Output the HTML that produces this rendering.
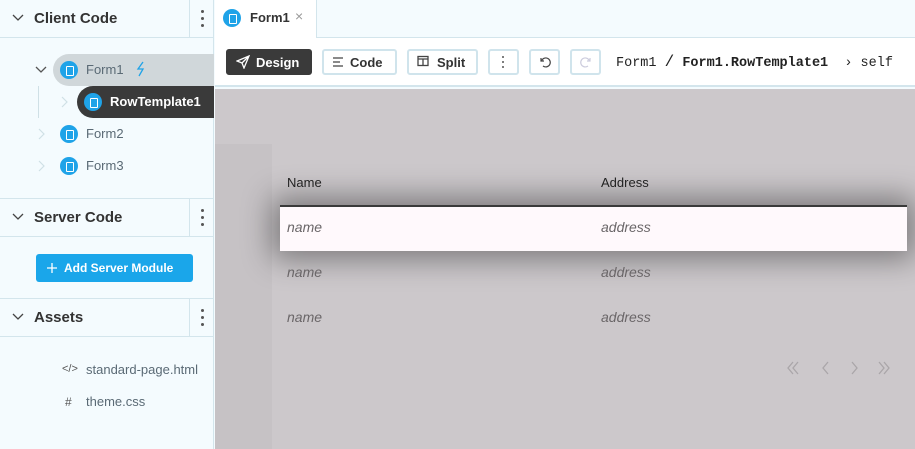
<!DOCTYPE html>
<html><head><style>
*{box-sizing:border-box;margin:0;padding:0}
body{width:915px;height:449px;overflow:hidden;font-family:"Liberation Sans",sans-serif;position:relative;background:#f4fbfe}
.a{position:absolute}
.side{left:0;top:0;width:214px;height:449px;background:#f4fbfe;border-right:1px solid #d3e5ec}
.hdr{left:0;width:214px;height:38px;border-bottom:1px solid #d3e5ec;font-weight:bold;font-size:15px;color:#333}
.hdr .t{position:absolute;left:34px;top:10px}
.hdr .chev{position:absolute;left:11px;top:11px}
.hdr .dots{position:absolute;left:189px;top:0;width:25px;height:37px;border-left:1px solid #d3e5ec}
.dot{position:absolute;width:3px;height:3px;border-radius:50%;background:#555;left:11px}
.ic{position:absolute;width:18px;height:18px;border-radius:50%;background:#1fa3e8}
.ic::after{content:"";position:absolute;left:6px;top:5px;width:6px;height:8px;border:1px solid #fff;border-radius:1px}
.lbl{position:absolute;font-size:13px;color:#5a6a75}
.btn{position:absolute;top:49px;height:26px;border:2px solid #d0e4ec;border-radius:3px;font-size:13px;font-weight:bold;color:#333;background:#fff}
.cell{position:absolute;font-size:14px;font-style:italic;color:#6a6668}
</style></head><body>
<div class="a side"></div>
<div class="a hdr" style="top:0"><svg class="chev" width="14" height="14"><path d="M2 4l5 5 5-5" stroke="#444" fill="none" stroke-width="1.3"/></svg><span class="t">Client Code</span><div class="dots"><i class="dot" style="top:10px"></i><i class="dot" style="top:17px"></i><i class="dot" style="top:24px"></i></div></div>
<div class="a" style="left:53px;top:54px;width:161px;height:32px;background:#d0d7da;border-radius:16px 0 0 16px"></div>
<svg class="a" style="left:34px;top:63px" width="14" height="14"><path d="M2 4l5 5 5-5" stroke="#555" fill="none" stroke-width="1.3"/></svg>
<div class="ic" style="left:60px;top:61px"></div><span class="lbl" style="left:86px;top:62px">Form1</span>
<svg class="a" style="left:135px;top:61px" width="12" height="16"><path d="M8 1L3 8h5l-4 7" stroke="#1fa3e8" fill="none" stroke-width="1.3"/></svg>
<div class="a" style="left:38px;top:86px;width:1px;height:32px;background:#cfe0e6"></div>
<div class="a" style="left:77px;top:86px;width:137px;height:32px;background:#3a3a3a;border-radius:16px 0 0 16px"></div>
<svg class="a" style="left:58px;top:95px" width="12" height="14"><path d="M4 2l5 5-5 5" stroke="#cfe0e6" fill="none" stroke-width="1.2"/></svg>
<div class="ic" style="left:84px;top:93px"></div><span class="lbl" style="left:110px;top:94px;color:#fff;font-weight:bold">RowTemplate1</span>
<svg class="a" style="left:35px;top:127px" width="12" height="14"><path d="M4 2l5 5-5 5" stroke="#cfe0e6" fill="none" stroke-width="1.2"/></svg>
<div class="ic" style="left:60px;top:125px"></div><span class="lbl" style="left:86px;top:126px">Form2</span>
<svg class="a" style="left:35px;top:159px" width="12" height="14"><path d="M4 2l5 5-5 5" stroke="#cfe0e6" fill="none" stroke-width="1.2"/></svg>
<div class="ic" style="left:60px;top:157px"></div><span class="lbl" style="left:86px;top:158px">Form3</span>
<div class="a" style="left:0;top:198px;width:214px;height:1px;background:#d3e5ec"></div>
<div class="a hdr" style="top:199px"><svg class="chev" width="14" height="14"><path d="M2 4l5 5 5-5" stroke="#444" fill="none" stroke-width="1.3"/></svg><span class="t">Server Code</span><div class="dots"><i class="dot" style="top:10px"></i><i class="dot" style="top:17px"></i><i class="dot" style="top:24px"></i></div></div>
<div class="a" style="left:36px;top:254px;width:157px;height:28px;background:#1aa6ea;border-radius:3px;color:#fff;font-size:12px;font-weight:bold;padding:7px 0 0 28px">Add Server Module</div>
<svg class="a" style="left:46px;top:262px" width="12" height="12"><path d="M6 1v10M1 6h10" stroke="#fff" stroke-width="1.3"/></svg>
<div class="a" style="left:0;top:298px;width:214px;height:1px;background:#d3e5ec"></div>
<div class="a hdr" style="top:299px"><svg class="chev" width="14" height="14"><path d="M2 4l5 5 5-5" stroke="#444" fill="none" stroke-width="1.3"/></svg><span class="t">Assets</span><div class="dots"><i class="dot" style="top:10px"></i><i class="dot" style="top:17px"></i><i class="dot" style="top:24px"></i></div></div>
<span class="a" style="left:62px;top:363px;font-size:11px;color:#555">&lt;/&gt;</span><span class="lbl" style="left:86px;top:362px">standard-page.html</span>
<span class="a" style="left:65px;top:395px;font-size:12px;color:#555">#</span><span class="lbl" style="left:86px;top:394px">theme.css</span>
<div class="a" style="left:215px;top:0;width:700px;height:38px;background:#f4fbfe;border-bottom:1px solid #d3e5ec"></div>
<div class="a" style="left:215px;top:0;width:102px;height:39px;background:#fff;border-right:1px solid #d3e5ec"></div>
<div class="ic" style="left:223px;top:9px"></div><span class="a" style="left:250px;top:10px;font-size:13px;font-weight:bold;color:#333">Form1</span><span class="a" style="left:295px;top:8px;font-size:14px;color:#999">×</span>
<div class="a" style="left:215px;top:38px;width:700px;height:49px;background:#fff;border-bottom:2px solid #d3e5ec"></div>
<div class="btn" style="left:226px;width:86px;background:#3a3a3a;border-color:#3a3a3a;color:#fff;padding:4px 0 0 28px">Design</div>
<svg class="a" style="left:236px;top:55px" width="14" height="14"><path d="M13 1L1 6l5 2 2 5z M6 8l7-7" stroke="#fff" fill="none" stroke-width="1.3"/></svg>
<div class="btn" style="left:322px;width:75px;padding:4px 0 0 26px">Code</div>
<svg class="a" style="left:332px;top:56px" width="12" height="12"><path d="M1 2h10M1 6h7M1 10h10" stroke="#444" stroke-width="1.2"/></svg>
<div class="btn" style="left:407px;width:71px;padding:4px 0 0 28px">Split</div>
<svg class="a" style="left:417px;top:55px" width="12" height="12"><rect x="1" y="1.5" width="10" height="9" stroke="#444" fill="none" stroke-width="1.3"/><path d="M1 4h10M6 4v7" stroke="#444" stroke-width="1.3"/></svg>
<div class="btn" style="left:488px;width:31px"><i class="dot" style="left:12px;top:5px;width:2px;height:2px"></i><i class="dot" style="left:12px;top:10px;width:2px;height:2px"></i><i class="dot" style="left:12px;top:15px;width:2px;height:2px"></i></div>
<div class="btn" style="left:529px;width:31px"></div>
<svg class="a" style="left:538px;top:55px" width="14" height="14"><path d="M3 3v3h3M3.5 6A4.5 4.5 0 1 1 5 11" stroke="#444" fill="none" stroke-width="1.2"/></svg>
<div class="btn" style="left:570px;width:31px"></div>
<svg class="a" style="left:579px;top:55px" width="14" height="14"><path d="M11 3v3h-3M10.5 6A4.5 4.5 0 1 0 9 11" stroke="#ccd" fill="none" stroke-width="1.2"/></svg>
<span class="a" style="left:616px;top:53px;font-family:'Liberation Mono',monospace;font-size:13.5px;color:#222;white-space:nowrap">Form1 <span style="font-size:16px">/</span> <b>Form1.RowTemplate1</b>&nbsp; › self</span>
<div class="a" style="left:215px;top:89px;width:700px;height:360px;background:#ccc8cb"></div>
<div class="a" style="left:215px;top:144px;width:57px;height:305px;background:#c6c2c5"></div>
<div class="a" style="left:280px;top:205px;width:627px;height:46px;background:#fff9fc;border-top:2px solid #3a3a3a;box-shadow:0 0 30px 8px rgba(0,0,0,.4)"></div>
<span class="a" style="left:287px;top:175px;font-size:13px;color:#222">Name</span>
<span class="a" style="left:601px;top:175px;font-size:13px;color:#222">Address</span>
<span class="cell" style="left:287px;top:219px">name</span><span class="cell" style="left:601px;top:219px">address</span>
<span class="cell" style="left:287px;top:264px">name</span><span class="cell" style="left:601px;top:264px">address</span>
<span class="cell" style="left:287px;top:309px">name</span><span class="cell" style="left:601px;top:309px">address</span>
<svg class="a" style="left:784px;top:359px" width="115" height="18"><g stroke="#aaa6a9" fill="none" stroke-width="1.3"><path d="M9 3l-5 6 5 6M14 3l-5 6 5 6M44 3l-5 6 5 6M68 3l5 6-5 6M95 3l5 6-5 6M100 3l5 6-5 6"/></g></svg>
</body></html>
